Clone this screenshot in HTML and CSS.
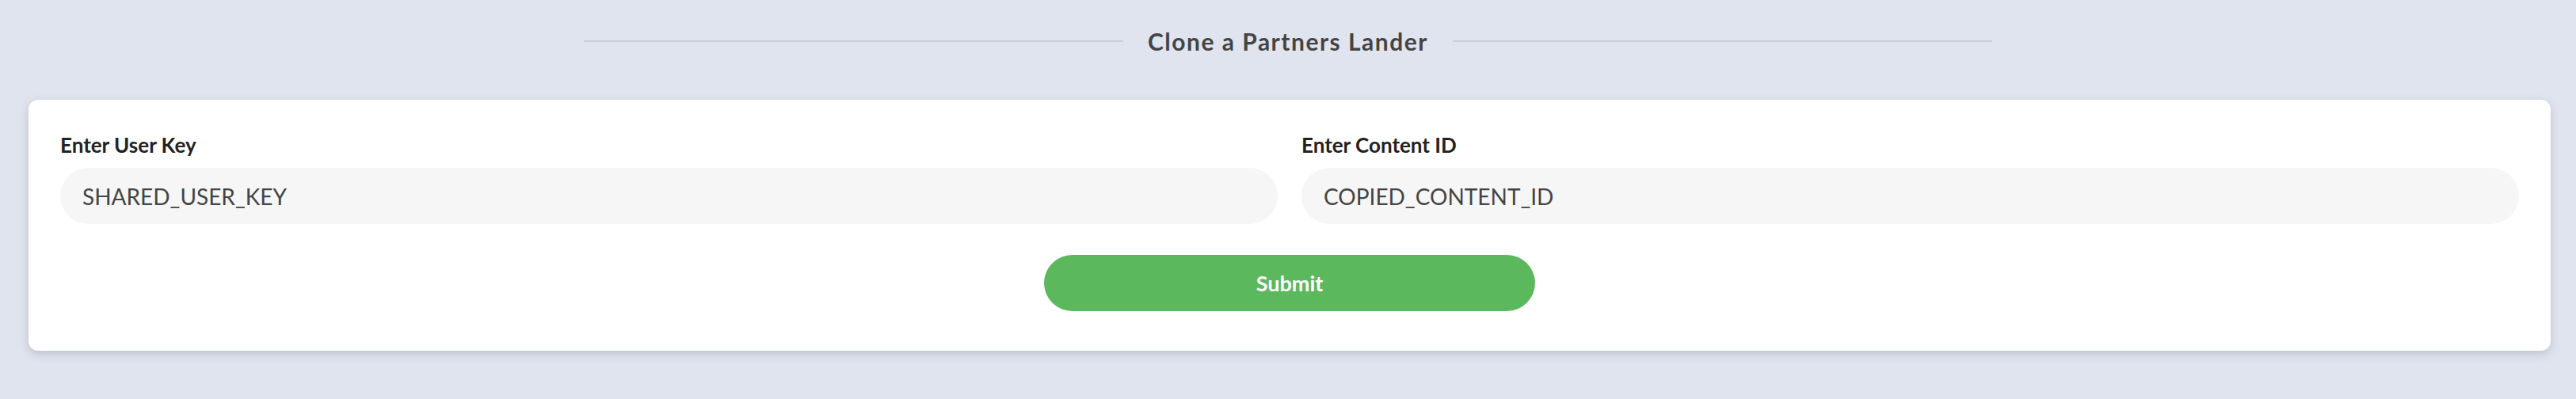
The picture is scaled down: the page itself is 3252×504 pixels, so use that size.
FILE: index.html
```html
<!DOCTYPE html>
<html lang="en">
<head>
  <meta charset="UTF-8" />
  <meta name="viewport" content="width=device-width, initial-scale=1.0" />
  <title>Clone a Partners Lander</title>
  <link rel="stylesheet" href="styles.css">
</head>
<body>
  <div class="title-row">
    <span class="title-line"></span>
    <h2 class="title">Clone a Partners Lander</h2>
    <span class="title-line"></span>
  </div>

  <form class="card">
    <div class="fields">
      <div class="field">
        <label for="userKey">Enter User Key</label>
        <input id="userKey" type="text" value="SHARED_USER_KEY" />
      </div>
      <div class="field">
        <label for="contentId">Enter Content ID</label>
        <input id="contentId" type="text" value="COPIED_CONTENT_ID" />
      </div>
    </div>
    <div class="actions">
      <button type="button" class="submit">Submit</button>
    </div>
  </form>
</body>
</html>
```

FILE: styles.css
```css
* {
  margin: 0;
  padding: 0;
  box-sizing: border-box;
}

html, body {
  height: 100%;
  overflow: hidden;
  font-family: Lato, "Open Sans", Arial, sans-serif;
  background-color: #e0e4ef;
}

.title-row {
  display: flex;
  align-items: flex-start;
  gap: 31px;
  width: 1778px;
  height: 126px;
  margin: 0 auto;
  padding-top: 32px;
}

.title-row .title-line {
  flex: 1;
  height: 2px;
  margin-top: 19px;
  background-color: #c9cdd8;
}

.title {
  font-size: 30px;
  font-weight: 700;
  letter-spacing: 1.5px;
  color: #444;
  line-height: 40px;
}

.card {
  margin: 0 32px 0 36px;
  padding: 40px 40px 50px;
  background-color: #fff;
  border-radius: 12px;
  box-shadow: 0 4px 12px rgba(80, 90, 120, 0.25);
}

.fields {
  display: grid;
  grid-template-columns: 1fr 1fr;
  gap: 30px;
}

.field label {
  display: block;
  font-size: 26px;
  font-weight: 700;
  color: #222;
  line-height: 34px;
  margin-bottom: 12px;
}

.field input {
  display: block;
  width: 100%;
  height: 71px;
  padding: 0 28px;
  border: none;
  border-radius: 36px;
  background-color: #f6f6f6;
  font-family: inherit;
  font-size: 28px;
  color: #444;
  outline: none;
}

.actions {
  display: flex;
  justify-content: center;
  margin-top: 39px;
}

.submit {
  width: 620px;
  height: 71px;
  border: none;
  border-radius: 36px;
  background-color: #5cb85c;
  color: #fff;
  font-family: inherit;
  font-size: 27px;
  font-weight: 700;
  cursor: pointer;
}
```
